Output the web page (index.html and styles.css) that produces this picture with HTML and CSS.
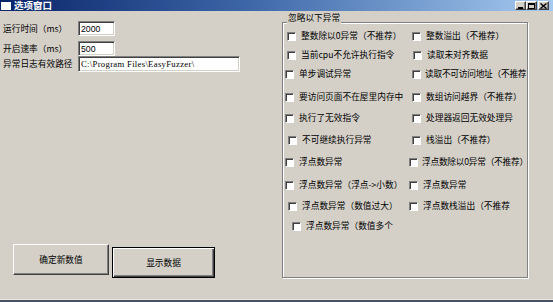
FILE: index.html
```html
<!DOCTYPE html>
<html>
<head>
  <meta charset="UTF-8">
  <title>选项窗口</title>
  <link rel="stylesheet" href="styles.css">
</head>
<body>
<div class="window">
  <div class="titlebar">
    <span class="app-icon"></span>
    <span class="title">选项窗口</span>
    <div class="caption-buttons">
      <span class="cap-btn"><svg width="7" height="6" viewBox="0 0 7 6"><rect x="1" y="4" width="5" height="2" fill="#000"/></svg></span>
      <span class="cap-btn"><svg width="7" height="6" viewBox="0 0 7 6"><rect x="0.5" y="0.5" width="6" height="5" fill="none" stroke="#000"/><rect x="0" y="0" width="7" height="2" fill="#000"/></svg></span>
      <span class="cap-btn close"><svg width="7" height="6" viewBox="0 0 7 6"><path d="M0.5 0.5 L6.5 5.5 M6.5 0.5 L0.5 5.5" stroke="#000" stroke-width="1.4"/></svg></span>
    </div>
  </div>

  <div class="client">
    <div class="settings">
      <div class="field">
        <label>运行时间（ms）</label>
        <input class="text short" type="text" value="2000">
      </div>
      <div class="field second">
        <label>开启速率（ms）</label>
        <input class="text short" type="text" value="500">
      </div>
      <div class="field">
        <label>异常日志有效路径</label>
        <input class="text path" type="text" value="C:\Program Files\EasyFuzzer\">
      </div>
      <div class="actions">
        <button class="btn" type="button">确定新数值</button>
        <button class="btn default" type="button">显示数据</button>
      </div>
    </div>

    <fieldset class="group">
      <legend>忽略以下异常</legend>
      <div class="checks">
        <label class="check s2"><span class="box"></span>整数除以0异常（不推荐）</label>
        <label class="check s3"><span class="box"></span>整数溢出（不推荐）</label>

        <label class="check s2"><span class="box"></span>当前cpu不允许执行指令</label>
        <label class="check s4"><span class="box"></span>读取未对齐数据</label>

        <label class="check"><span class="box"></span>单步调试异常</label>
        <label class="check s3 tight"><span class="box"></span>读取不可访问地址（不推荐</label>

        <label class="check"><span class="box"></span>要访问页面不在屋里内存中</label>
        <label class="check s3"><span class="box"></span>数组访问越界（不推荐）</label>

        <label class="check"><span class="box"></span>执行了无效指令</label>
        <label class="check s3"><span class="box"></span>处理器返回无效处理异</label>

        <label class="check s3"><span class="box"></span>不可继续执行异常</label>
        <label class="check s3"><span class="box"></span>栈溢出（不推荐）</label>

        <label class="check"><span class="box"></span>浮点数异常</label>
        <label class="check tight"><span class="box"></span>浮点数除以0异常（不推荐）</label>

        <label class="check"><span class="box"></span>浮点数异常（浮点->小数）</label>
        <label class="check"><span class="box"></span>浮点数异常</label>

        <label class="check s3"><span class="box"></span>浮点数异常（数值过大）</label>
        <label class="check"><span class="box"></span>浮点数栈溢出（不推荐</label>

        <label class="check s7"><span class="box"></span>浮点数异常（数值多个</label>
      </div>
    </fieldset>
  </div>

  <div class="edge"></div>
</div>
</body>
</html>
```

FILE: styles.css
```css
body {
  margin: 0;
  background-color: #d4d0c8;
  font-family: "Noto Sans CJK SC", sans-serif;
  font-size: 8.7px;
  color: #000;
}
.window {
  width: 553px;
  height: 302px;
  display: flex;
  flex-direction: column;
}

/* Title bar */
.titlebar {
  height: 11px;
  flex: none;
  display: flex;
  align-items: center;
  background: linear-gradient(to right, #0a246a 0%, #3d67a8 45%, #a6caf0 100%);
}
.app-icon {
  width: 10px;
  height: 8px;
  margin: 0 3px 0 1px;
  background-color: #fff;
}
.title {
  color: #fff;
  font-family: "Liberation Sans", "Noto Sans CJK SC", sans-serif;
  font-weight: bold;
  font-size: 9.5px;
  line-height: 11px;
}
.caption-buttons {
  margin-left: auto;
  margin-right: 4px;
  display: flex;
}
.cap-btn {
  width: 11px;
  height: 9px;
  box-sizing: border-box;
  display: flex;
  align-items: center;
  justify-content: center;
  background-color: #d4d0c8;
  border: 1px solid;
  border-color: #fff #404040 #404040 #fff;
  box-shadow: inset -1px -1px 0 #808080;
}
.cap-btn svg {
  display: block;
}
.cap-btn.close {
  margin-left: 1px;
}

/* Client area */
.client {
  flex: 1;
  display: flex;
}
.settings {
  width: 282px;
  flex: none;
  box-sizing: border-box;
  padding: 10px 0 0 3px;
  display: flex;
  flex-direction: column;
}
.field {
  display: flex;
  align-items: center;
}
.field.second {
  margin-top: 5px;
}
.field label {
  width: 75px;
  flex: none;
  line-height: 12px;
}
.text {
  box-sizing: border-box;
  margin: 0;
  padding: 0 0 0 2px;
  background-color: #fff;
  border: 1px solid;
  border-color: #808080 #fff #fff #808080;
  box-shadow: inset 1px 1px 0 #404040, inset -1px -1px 0 #d4d0c8;
  font-family: "Liberation Sans", sans-serif;
  font-size: 8.7px;
  color: #000;
  outline: none;
}
.text.short {
  width: 37px;
  height: 15px;
}
.text.path {
  width: 162px;
  height: 16px;
  font-family: "Liberation Serif", serif;
  letter-spacing: 0.3px;
}
.actions {
  margin-top: 172px;
  padding-left: 10px;
  display: flex;
  align-items: flex-start;
  gap: 3px;
}
.btn {
  width: 96px;
  height: 31px;
  margin: 0;
  padding: 0;
  box-sizing: border-box;
  background-color: #d4d0c8;
  border: 1px solid;
  border-color: #fff #404040 #404040 #fff;
  box-shadow: inset -1px -1px 0 #808080;
  font-family: "Noto Sans CJK SC", sans-serif;
  font-size: 8.7px;
  color: #000;
}
.btn.default {
  width: 103px;
  margin-top: 3px;
  border-color: #000;
  box-shadow: inset 1px 1px 0 #fff, inset -1px -1px 0 #404040, inset -2px -2px 0 #808080;
}

/* Group box */
.group {
  width: 246px;
  height: 266px;
  min-width: 0;
  box-sizing: border-box;
  margin: 1px 0 0;
  padding: 0 0 0 2px;
  border: 1px solid #808080;
  box-shadow: 1px 1px 0 #fff, inset 1px 1px 0 #fff;
}
.group legend {
  margin-left: 2px;
  padding: 0 1px 9px;
  line-height: 12px;
  background-color: #d4d0c8;
}
.checks {
  margin-top: -3px;
  display: grid;
  grid-template-columns: 124px minmax(0, 1fr);
  grid-template-rows: 19px 19px 23px 21px 22px 22px 23px 21px 20px 12px;
}
.check {
  height: 12px;
  line-height: 12px;
  display: flex;
  align-items: center;
  gap: 5px;
  white-space: nowrap;
  overflow: hidden;
}
.check.tight {
  gap: 4px;
  letter-spacing: -0.25px;
}
.box {
  width: 9px;
  height: 9px;
  flex: none;
  box-sizing: border-box;
  background-color: #fff;
  border: 1px solid;
  border-color: #808080 #fff #fff #808080;
  box-shadow: inset 1px 1px 0 #404040;
}
.s2 { margin-left: 2px; }
.s3 { margin-left: 3px; }
.s4 { margin-left: 4px; }
.s7 { margin-left: 7px; }

.edge {
  height: 2px;
  flex: none;
  border-top: 1px solid #ebe8e2;
  background-color: #4b5366;
}
```
